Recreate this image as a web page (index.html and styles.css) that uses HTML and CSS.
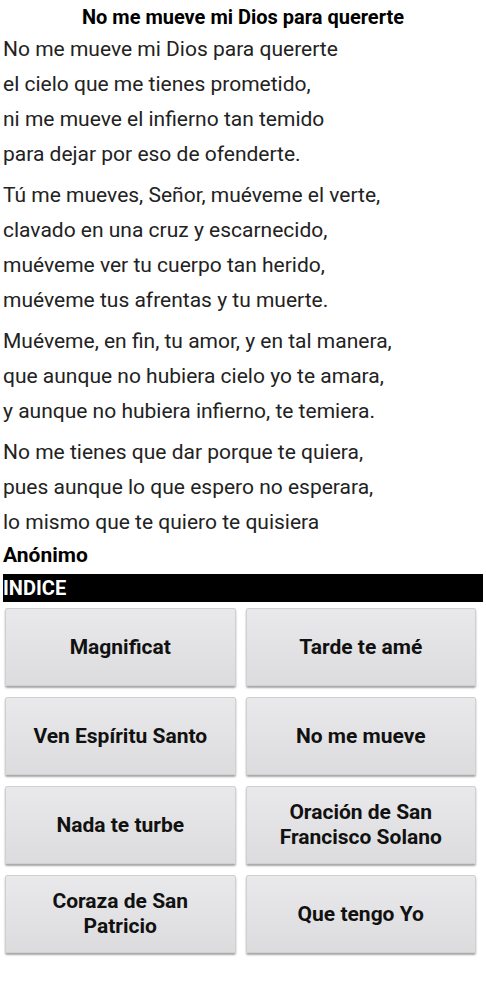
FILE: index.html
```html
<!DOCTYPE html>
<html lang="es">
<head>
  <meta charset="UTF-8">
  <meta name="viewport" content="width=device-width, initial-scale=1.0">
  <title>No me mueve mi Dios para quererte</title>
  <link rel="stylesheet" href="styles.css">
</head>
<body>

<h1 class="titulo">No me mueve mi Dios para quererte</h1>

<div class="poema">
  <p>No me mueve mi Dios para quererte<br>
  el cielo que me tienes prometido,<br>
  ni me mueve el infierno tan temido<br>
  para dejar por eso de ofenderte.</p>

  <p>Tú me mueves, Señor, muéveme el verte,<br>
  clavado en una cruz y escarnecido,<br>
  muéveme ver tu cuerpo tan herido,<br>
  muéveme tus afrentas y tu muerte.</p>

  <p>Muéveme, en fin, tu amor, y en tal manera,<br>
  que aunque no hubiera cielo yo te amara,<br>
  y aunque no hubiera infierno, te temiera.</p>

  <p>No me tienes que dar porque te quiera,<br>
  pues aunque lo que espero no esperara,<br>
  lo mismo que te quiero te quisiera</p>
</div>

<div class="autor">Anónimo</div>

<div class="indice">INDICE</div>

<div class="botones">
  <button class="btn">Magnificat</button>
  <button class="btn">Tarde te amé</button>
  <button class="btn">Ven Espíritu Santo</button>
  <button class="btn">No me mueve</button>
  <button class="btn">Nada te turbe</button>
  <button class="btn">Oración de San Francisco Solano</button>
  <button class="btn">Coraza de San Patricio</button>
  <button class="btn">Que tengo Yo</button>
</div>

</body>
</html>
```

FILE: styles.css
```css
* { box-sizing: border-box; margin: 0; padding: 0; }
body {
  font-family: Roboto, "Liberation Sans", sans-serif;
  background: #fff;
  color: #111;
  padding: 4px 3px 20px 3px;
}
.titulo {
  font-size: 20px;
  font-weight: bold;
  text-align: center;
  line-height: 26px;
  margin-bottom: 2px;
  color: #000;
}
.poema p {
  font-size: 21px;
  line-height: 35px;
  margin-bottom: 6px;
  color: #222;
}
.poema p:last-child { margin-bottom: 0; }
.autor {
  font-size: 21px;
  font-weight: bold;
  line-height: 28px;
  margin-top: 1px;
  color: #000;
}
.indice {
  margin-top: 5px;
  background: #000;
  color: #fff;
  font-size: 20px;
  font-weight: bold;
  line-height: 28px;
}
.botones {
  display: grid;
  grid-template-columns: 1fr 1fr;
  column-gap: 10px;
  row-gap: 11px;
  padding: 6px 7px 0 2px;
}
.btn {
  height: 78px;
  font-family: Roboto, "Liberation Sans", sans-serif;
  font-size: 21px;
  font-weight: bold;
  line-height: 25px;
  color: #111;
  background: linear-gradient(180deg, #e9e9eb, #dcdcde);
  border: 1px solid #d0d0d0;
  border-radius: 2px;
  box-shadow: 0 2px 2px rgba(0, 0, 0, 0.35);
  padding: 0 20px;
}
```
